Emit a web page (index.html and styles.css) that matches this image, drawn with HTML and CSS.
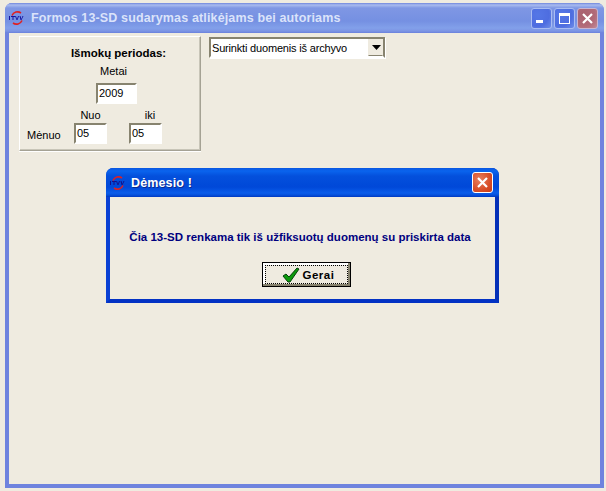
FILE: index.html
```html
<!DOCTYPE html>
<html lang="lt">
<head>
<meta charset="utf-8">
<title>Formos 13-SD</title>
<link rel="stylesheet" href="styles.css">
</head>
<body>
<div class="window">
  <div class="titlebar">
    <svg class="logo" width="16" height="14" viewBox="0 0 16 14"><path d="M3 4.500 A6 6 0 0 1 12 2" fill="none" stroke="#e02020" stroke-width="1.6"/><path d="M13 9.500 A6 6 0 0 1 4 12" fill="none" stroke="#e02020" stroke-width="1.6"/><path d="M0 5h1v4H0zM2 5h4v1H4.500v3h-1V6H2zM6 5h1l1 3 1-3h1L8.500 9h-1zM10.500 5h1l1 3 1-3h1L12.500 9h-1z" fill="#1414a0"/></svg>
    <span class="title">Formos 13-SD sudarymas atlikėjams bei autoriams</span>
    <div class="controls">
      <div class="ctl"><svg width="19" height="19" viewBox="0 0 19 19"><rect x="4" y="11" width="7" height="3" fill="#fff"/></svg></div>
      <div class="ctl"><svg width="19" height="19" viewBox="0 0 19 19"><rect x="4.500" y="4.500" width="10" height="10" fill="none" stroke="#fff"/><rect x="4" y="4" width="11" height="3" fill="#fff"/></svg></div>
      <div class="ctl ctl-close"><svg width="19" height="19" viewBox="0 0 19 19"><path d="M5 5l9 9M14 5l-9 9" stroke="#fff" stroke-width="2.2"/></svg></div>
    </div>
  </div>
  <div class="client">
    <div class="panel">
      <div class="panel-head">Išmokų periodas:</div>
      <div class="year-col">
        <span class="lbl lbl-metai">Metai</span>
        <div class="field field-year">2009</div>
      </div>
      <div class="month-row">
        <span class="lbl month-lbl">Mėnuo</span>
        <div class="month-col">
          <span class="lbl">Nuo</span>
          <div class="field field-month">05</div>
        </div>
        <div class="month-col">
          <span class="lbl lbl-iki">iki</span>
          <div class="field field-month">05</div>
        </div>
      </div>
    </div>
    <div class="combo">
      <span class="combo-text">Surinkti duomenis iš archyvo</span>
      <span class="combo-btn"><svg width="9" height="5" viewBox="0 0 9 5"><path d="M0 0h9L4.500 5z" fill="#000"/></svg></span>
    </div>
  </div>
</div>
<div class="dialog">
  <div class="dlg-titlebar">
    <svg class="logo" width="16" height="14" viewBox="0 0 16 14"><path d="M3 4.500 A6 6 0 0 1 12 2" fill="none" stroke="#e02020" stroke-width="1.6"/><path d="M13 9.500 A6 6 0 0 1 4 12" fill="none" stroke="#e02020" stroke-width="1.6"/><path d="M0 5h1v4H0zM2 5h4v1H4.500v3h-1V6H2zM6 5h1l1 3 1-3h1L8.500 9h-1zM10.500 5h1l1 3 1-3h1L12.500 9h-1z" fill="#10108c"/></svg>
    <span class="dlg-title">Dėmesio !</span>
    <div class="dlg-close"><svg width="19" height="19" viewBox="0 0 19 19"><path d="M5 5l9 9M14 5l-9 9" stroke="#fff" stroke-width="2.2"/></svg></div>
  </div>
  <div class="dlg-body">
    <p class="dlg-msg">Čia 13-SD renkama tik iš užfiksuotų duomenų su priskirta data</p>
    <div class="btn"><div class="btn-inner">
      <svg width="18" height="16" viewBox="0 0 18 16"><path d="M1 9l3-2 3 3 8-9 2 1-9 13h-2z" fill="#0c9a0c" stroke="#04420a" stroke-width="1"/></svg>
      <span>Gerai</span>
    </div></div>
  </div>
</div>
</body>
</html>
```
FILE: styles.css
```css
html, body { margin: 0; padding: 0; }
body {
  width: 606px;
  height: 491px;
  overflow: hidden;
  background: #efebe0;
  position: relative;
  font-family: "Liberation Sans", Arial, sans-serif;
  font-size: 11px;
  color: #000;
}
.window {
  position: absolute;
  left: 5px;
  top: 3px;
  width: 599px;
  height: 485px;
  box-sizing: border-box;
  display: flex;
  flex-direction: column;
  background: #7c92e2;
  border: 4px solid #6f83de;
  border-top: 0;
  border-radius: 7px 7px 0 0;
  box-shadow: inset 0 -1px 0 #5a5fb0;
}
.titlebar {
  height: 30px;
  flex: none;
  margin: 0 -4px;
  padding: 0 4px 0 4px;
  display: flex;
  align-items: center;
  border-radius: 7px 7px 0 0;
  background: linear-gradient(#6f86dc 0, #a9bbef 2px, #7f97e4 5px, #7590e2 18px, #82a0ea 25px, #7d95e4 28px, #6a80dc 30px);
}
.logo { flex: none; margin-left: 0; }
.title {
  margin-left: 6px;
  font: bold 12.500px "Liberation Sans", sans-serif;
  letter-spacing: 0.14px;
  color: #dbe3fa;
  white-space: nowrap;
}
.controls { margin-left: auto; display: flex; gap: 2px; padding-right: 2px; }
.ctl {
  width: 21px; height: 21px;
  box-sizing: border-box;
  border: 1px solid #a9bcf2;
  border-radius: 3px;
  background: radial-gradient(circle at 30% 30%, #5577e6, #4e6de0 60%, #6f8ee8);
}
.ctl svg { display: block; }
.ctl-close { background: radial-gradient(circle at 30% 30%, #a8606e, #b26a78 60%, #c08a98); border-color: #c9b5d0; }
.client {
  flex: 1;
  background: #efebe0;
  display: flex;
  align-items: flex-start;
  gap: 8px;
  padding: 3px 0 0 10px;
}
.panel {
  width: 182px;
  height: 115px;
  box-sizing: border-box;
  border: 1px solid;
  border-color: #fff #a5a294 #a5a294 #fff;
  box-shadow: inset -1px -1px 0 #c8c5b8, 0 1px 0 #fff;
  display: flex;
  flex-direction: column;
  align-items: center;
  padding-top: 9px;
}
.panel-head { font-weight: bold; font-size: 11.500px; line-height: 15px; margin-left: 17px; }
.year-col { display: flex; flex-direction: column; align-items: center; margin: 4px 0 0 13px; }
.lbl { font-size: 11px; line-height: 13px; }
.lbl-metai { margin-right: 6px; }
.lbl-iki { margin-left: 9px; }
.field {
  box-sizing: border-box;
  height: 21px;
  background: #fff;
  border: 2px solid;
  border-color: #87836f #fff #fff #87836f;
  line-height: 17px;
  padding-left: 1px;
}
.field-year { width: 41px; margin-top: 5px; }
.field-month { width: 33px; margin-top: 1px; }
.month-row { display: flex; align-items: flex-end; align-self: flex-start; margin: 5px 0 0 7px; }
.month-lbl { width: 47px; line-height: 17px; }
.month-col { display: flex; flex-direction: column; align-items: center; width: 33px; margin-right: 22px; }
.combo {
  width: 176px;
  height: 21px;
  box-sizing: border-box;
  margin-top: 1px;
  background: #fff;
  border: 2px solid;
  border-color: #87836f #87836f #fff #87836f;
  box-shadow: 1px 1px 0 #fff;
  display: flex;
  align-items: center;
  justify-content: space-between;
  padding-left: 1px;
}
.combo-text { letter-spacing: -0.18px; }
.combo-btn {
  width: 15px; height: 17px;
  box-sizing: border-box;
  background: #efebe0;
  border: 1px solid;
  border-color: #efebe0 #efebe0 #87836f #efebe0;
  padding-left: 2px;
  display: flex; align-items: center; justify-content: center;
}
.dialog {
  position: absolute;
  left: 106px;
  top: 168px;
  width: 393px;
  height: 135px;
  box-sizing: border-box;
  background: #0a3fd0;
  border: 4px solid #0a40d4;
  border-top: 0;
  border-bottom-color: #0332c4;
  border-right-color: #0530b8;
  border-radius: 7px 7px 0 0;
  display: flex;
  flex-direction: column;
}
.dlg-titlebar {
  height: 29px;
  flex: none;
  margin: 0 -4px;
  padding: 0 6px 0 4px;
  display: flex;
  align-items: center;
  border-radius: 7px 7px 0 0;
  background: linear-gradient(#0a56e0 0, #0a64ee 3px, #0450dc 8px, #0048d8 19px, #0a5cea 25px, #0550dc 27px, #0038c0 29px);
}
.dlg-title {
  margin-left: 5px;
  font: bold 12.500px "Liberation Sans", sans-serif;
  letter-spacing: 0.14px;
  color: #fff;
  text-shadow: 1px 1px 0 #0a2a90;
}
.dlg-close {
  margin-left: auto;
  width: 21px; height: 21px;
  box-sizing: border-box;
  border: 1px solid #fff;
  border-radius: 3px;
  background: radial-gradient(circle at 35% 35%, #e88060, #d84e28 60%, #c83a18);
}
.dlg-close svg { display: block; }
.dlg-body {
  flex: 1;
  background: #efebe0;
  display: flex;
  flex-direction: column;
  align-items: center;
}
.dlg-msg {
  margin: 32px 5px 0 0;
  font: bold 11.500px "Liberation Sans", sans-serif;
  line-height: 16px;
  color: #00007f;
  white-space: nowrap;
}
.btn {
  width: 89px;
  height: 25px;
  box-sizing: border-box;
  margin: 17px 0 0 8px;
  border: 1px solid #000;
  background: #efebe0;
  padding: 2px;
  box-shadow: inset -2px -2px 0 #87836f, inset 2px 2px 0 #fff;
}
.btn-inner {
  height: 100%;
  box-sizing: border-box;
  border: 1px dotted #000;
  display: flex;
  align-items: center;
  justify-content: center;
  gap: 3px;
  padding-left: 3px;
  font: bold 11.500px "Liberation Sans", sans-serif;
  letter-spacing: 0.5px;
}
```
